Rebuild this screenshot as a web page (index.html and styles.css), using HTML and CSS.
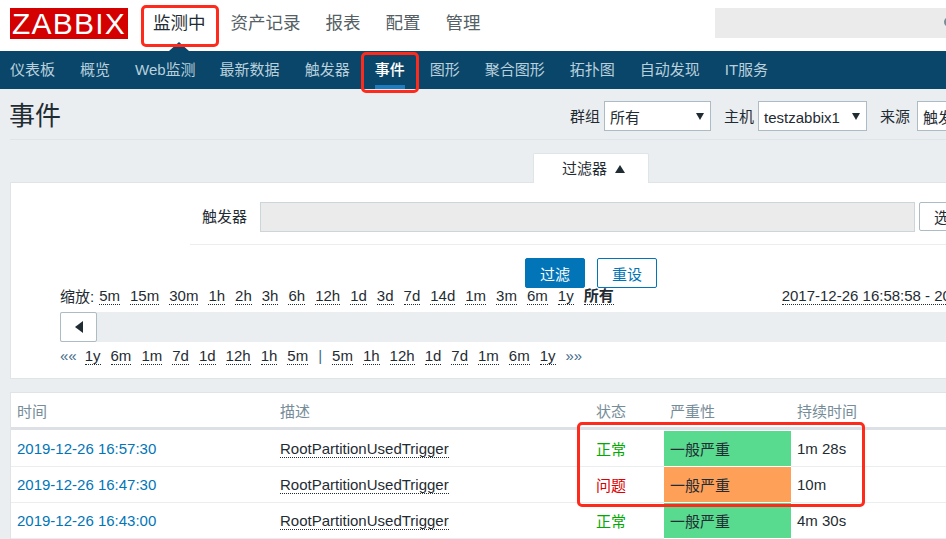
FILE: index.html

```html
<!DOCTYPE html>
<html lang="zh-CN">
<head>
    <meta charset="UTF-8">
    <title>事件</title>
    <link rel="stylesheet" href="styles.css">
</head>
<body>
    <header class="top">
        <div class="logo">ZABBIX</div>
        <nav class="main-nav">
            <a class="active">监测中</a>
            <a>资产记录</a>
            <a>报表</a>
            <a>配置</a>
            <a>管理</a>
        </nav>
        <div class="search">
            <svg width="12" height="14" viewBox="0 0 12 14"><circle cx="6" cy="6" r="4" fill="none" stroke="#768d99" stroke-width="2"/></svg>
        </div>
    </header>

    <nav class="sub-nav">
        <a>仪表板</a>
        <a>概览</a>
        <a class="web">Web监测</a>
        <a>最新数据</a>
        <a>触发器</a>
        <a class="active">事件</a>
        <a>图形</a>
        <a>聚合图形</a>
        <a>拓扑图</a>
        <a>自动发现</a>
        <a>IT服务</a>
    </nav>

    <div class="title-bar">
        <h1>事件</h1>
        <form class="controls">
            <label>群组</label>
            <div class="select group-select">所有<span class="arrow-down"></span></div>
            <label class="next">主机</label>
            <div class="select host-select">testzabbix1<span class="arrow-down"></span></div>
            <label class="next">来源</label>
            <div class="select source-select">触发器</div>
        </form>
    </div>

    <div class="filter-tab">过滤器 <span class="arrow-up"></span></div>

    <section class="filter card">
        <div class="filter-row">
            <label>触发器</label>
            <div class="fake-input"></div>
            <button class="btn-select" type="button">选择</button>
        </div>
        <div class="filter-buttons">
            <button class="btn-primary" type="button">过滤</button>
            <button class="btn-outline" type="button">重设</button>
        </div>

        <div class="zoom-row">
            <span>缩放:</span>
            <a>5m</a><a>15m</a><a>30m</a><a>1h</a><a>2h</a><a>3h</a><a>6h</a><a>12h</a><a>1d</a><a>3d</a><a>7d</a><a>14d</a><a>1m</a><a>3m</a><a>6m</a><a>1y</a><a class="current">所有</a>
            <a class="range">2017-12-26 16:58:58 - 2019-12-26 16:58:58</a>
        </div>
        <div class="slider">
            <button class="slider-btn" type="button"><span class="arrow-left"></span></button>
        </div>
        <div class="step-row">
            <span class="quote first">««</span>
            <a>1y</a><a>6m</a><a>1m</a><a>7d</a><a>1d</a><a>12h</a><a>1h</a><a>5m</a>
            <span class="quote">|</span>
            <a>5m</a><a>1h</a><a>12h</a><a>1d</a><a>7d</a><a>1m</a><a>6m</a><a>1y</a>
            <span class="quote">»»</span>
        </div>
    </section>

    <section class="events card">
        <table>
            <colgroup>
                <col class="col-time"><col class="col-desc"><col class="col-status"><col class="col-sev"><col>
            </colgroup>
            <thead>
                <tr><th>时间</th><th>描述</th><th>状态</th><th>严重性</th><th>持续时间</th></tr>
            </thead>
            <tbody>
                <tr>
                    <td><a class="time">2019-12-26 16:57:30</a></td>
                    <td><a class="trigger">RootPartitionUsedTrigger</a></td>
                    <td class="ok">正常</td>
                    <td class="sev-green">一般严重</td>
                    <td>1m 28s</td>
                </tr>
                <tr>
                    <td><a class="time">2019-12-26 16:47:30</a></td>
                    <td><a class="trigger">RootPartitionUsedTrigger</a></td>
                    <td class="problem">问题</td>
                    <td class="sev-orange">一般严重</td>
                    <td>10m</td>
                </tr>
                <tr>
                    <td><a class="time">2019-12-26 16:43:00</a></td>
                    <td><a class="trigger">RootPartitionUsedTrigger</a></td>
                    <td class="ok">正常</td>
                    <td class="sev-green">一般严重</td>
                    <td>4m 30s</td>
                </tr>
            </tbody>
        </table>
    </section>

    <!-- red annotations drawn over the screenshot -->
    <div class="mark mark-nav"></div>
    <div class="mark mark-sub"></div>
    <div class="mark mark-rows"></div>
</body>
</html>
```

FILE: styles.css

```css
html, body { height: 539px; overflow: hidden; }
body { margin: 0; background: #ebeef0; color: #1f2c33; font-family: "Liberation Sans", "Noto Sans CJK SC", sans-serif; font-size: 15px; position: relative; }
a { color: inherit; text-decoration: none; }
button { font-family: inherit; font-size: 15px; padding: 0; background: #fff; }

/* top bar */
.top { height: 51px; background: #fff; display: flex; align-items: flex-start; }
.logo { width: 118px; height: 31px; margin: 8px 0 0 10px; background: #d40000; color: #fff; font-size: 30px; line-height: 32px; text-align: center; letter-spacing: 1.2px; overflow: hidden; }
.main-nav { display: flex; gap: 25px; margin: 10px 0 0 25px; font-size: 17.5px; line-height: 26px; color: #555f65; position: relative; }
.main-nav .active { color: #1f2c33; position: relative; }
.main-nav .active::after { content: ""; position: absolute; left: 16px; top: 32px; border: 10px solid transparent; border-top: 0; border-bottom: 9px solid #0a466a; }
.search { width: 231px; height: 30px; margin: 8px 0 0 auto; background: #ebebeb; display: flex; align-items: center; justify-content: flex-end; overflow: hidden; }
.search svg { flex: none; margin-right: -9px; }

/* second nav */
.sub-nav { height: 38px; background: #0a466a; display: flex; gap: 25px; padding-left: 10px; color: #b9d0dc; line-height: 37px; }
.sub-nav .web { margin-right: -1px; }
.sub-nav .active { color: #fff; font-weight: 500; border-bottom: 4px solid #1f7dbf; height: 33px; margin-top: 1px; line-height: 35px; }

/* title + selects */
.title-bar { height: 50px; margin: 0 0 0 10px; border-bottom: 1px solid #dfe4e7; display: flex; justify-content: space-between; overflow: hidden; }
h1 { margin: 0 0 0 -1px; font-size: 26px; font-weight: normal; line-height: 54px; }
.controls { display: flex; align-items: flex-start; margin: 12px 0 0 auto; flex: none; width: 376px; overflow: hidden; }
.controls label { line-height: 32px; margin-right: 4px; flex: none; }
.controls .next { margin-left: 13px; }
.select { height: 28px; border: 1px solid #acbbc4; background: #fff; line-height: 31px; padding-left: 5px; position: relative; flex: none; }
.group-select { width: 100px; }
.host-select { width: 102px; }
.source-select { width: 60px; margin-left: 3px; }
.arrow-down { position: absolute; right: 6px; top: 11px; border: 4px solid transparent; border-bottom: 0; border-top: 7px solid #1f2c33; }

/* filter */
.filter-tab { width: 116px; height: 30px; margin: 13px 0 -1px 533px; background: #fff; border: 1px solid #dfe4e7; border-bottom: 0; border-radius: 2px 2px 0 0; box-sizing: border-box; padding-left: 28px; line-height: 29px; position: relative; z-index: 1; }
.arrow-up { display: inline-block; margin-left: 4px; vertical-align: 1px; border: 5px solid transparent; border-top: 0; border-bottom: 8px solid #1f2c33; }
.card { margin-left: 10px; background: #fff; border: 1px solid #dfe4e7; border-right: 0; }
.filter { height: 195px; overflow: hidden; }
.filter-row { display: flex; align-items: flex-start; margin: 19px 0 0 179px; padding-bottom: 12px; border-bottom: 1px solid #ebeef0; white-space: nowrap; }
.filter-row label { width: 57px; text-align: right; line-height: 29px; margin-right: 13px; flex: none; }
.fake-input { width: 653px; height: 28px; flex: none; background: #ebebeb; border: 1px solid #ccd5d9; }
.btn-select { width: 70px; height: 29px; flex: none; margin-left: 4px; border: 1px solid #acbbc4; border-radius: 2px; color: #1f2c33; text-align: left; padding-left: 14px; }
.filter-buttons { display: flex; gap: 12px; margin: 13px 0 0 514px; }
.filter-buttons button { width: 60px; height: 30px; border-radius: 2px; border: 1px solid #0275b8; }
.btn-primary { background: #0275b8; color: #fff; }
.btn-outline { color: #0275b8; }
.zoom-row, .step-row { display: flex; gap: 10px; margin-left: 49px; white-space: nowrap; }
.zoom-row { height: 24px; line-height: 17px; align-items: flex-end; }
.zoom-row a, .step-row a { border-bottom: 1px dotted #1f2c33; }
.zoom-row span { margin-right: -5px; }
.zoom-row a, .zoom-row span { position: relative; top: -7px; }
.zoom-row .current { font-weight: bold; }
.zoom-row .range { margin-left: 158px; }
.slider { height: 30px; margin-left: 49px; background: #ebeef0; }
.slider-btn { width: 37px; height: 30px; border: 1px solid #acbbc4; border-radius: 2px; display: flex; align-items: center; justify-content: center; }
.arrow-left { border: 6px solid transparent; border-left: 0; border-right: 8px solid #1f2c33; }
.step-row { margin-top: 5px; line-height: 17px; }
.quote { color: #3f6a88; }
.quote.first { margin-right: -2px; }

/* event table */
.events { margin-top: 13px; }
table { width: 100%; border-collapse: separate; border-spacing: 0; table-layout: fixed; }
.col-time { width: 263px; }
.col-desc { width: 316px; }
.col-status { width: 74px; }
.col-sev { width: 127px; }
th { height: 37px; padding: 0 6px; text-align: left; font-weight: normal; color: #768d99; border-bottom: 3px solid #dde1e5; box-sizing: border-box; }
td { height: 36px; padding: 0 6px; border-bottom: 1px solid #ebeef0; box-sizing: border-box; white-space: nowrap; }
tbody tr:first-child td { height: 37px; padding-top: 1px; }
.time { color: #0275b8; }
.trigger { border-bottom: 1px dotted #1f2c33; }
.ok { color: #00aa00; }
.problem { color: #dc0000; }
.sev-green { background: #59db8f; }
.sev-orange { background: #ffa059; }
td.sev-green, td.sev-orange { border-bottom-color: #fff; }
tbody tr:first-child td.sev-green { padding-top: 0; border-top: 1px solid #fff; }

/* annotations */
.mark { position: absolute; box-sizing: border-box; border: 3px solid #fe2a1c; border-radius: 5px; }
.mark-nav { left: 141px; top: 5px; width: 78px; height: 42px; }
.mark-sub { left: 361px; top: 52px; width: 58px; height: 41px; }
.mark-rows { left: 577px; top: 422px; width: 288px; height: 85px; }
```
